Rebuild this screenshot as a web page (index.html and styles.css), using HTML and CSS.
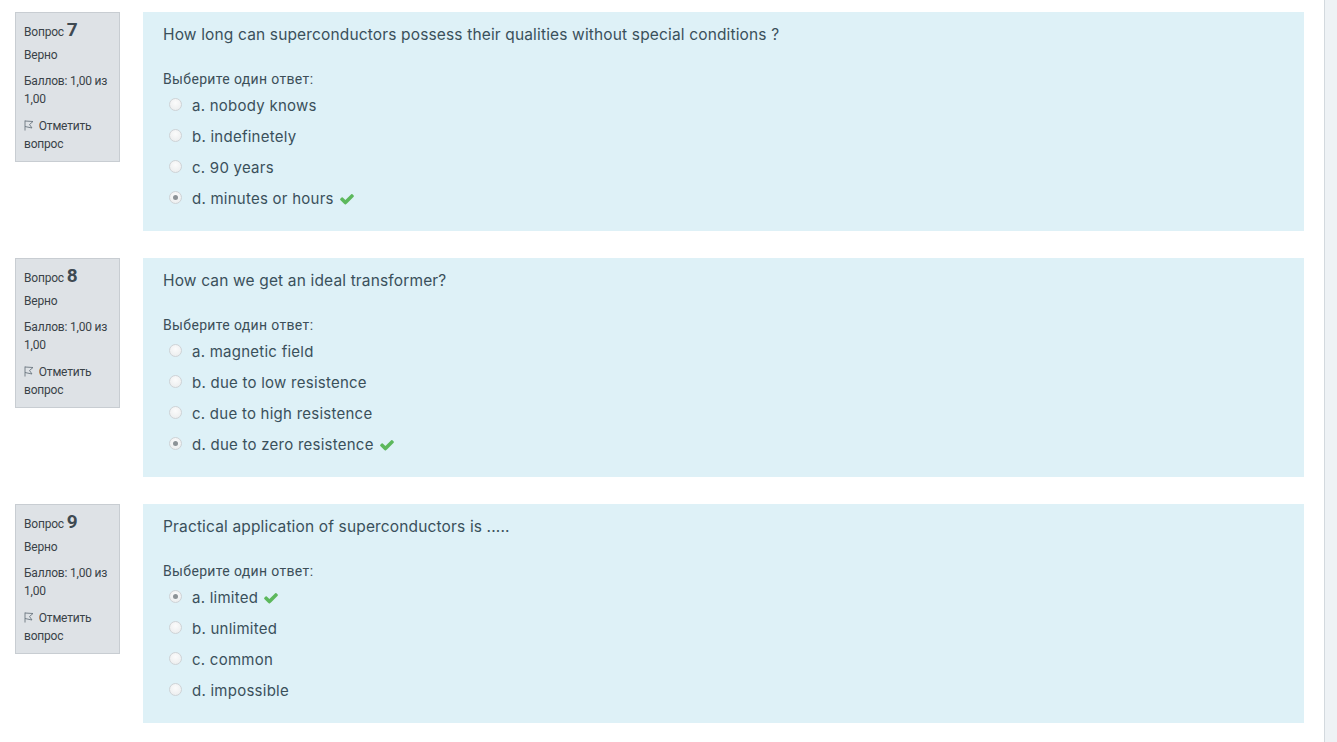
FILE: index.html
```html
<!DOCTYPE html>
<html lang="ru">
<head>
<meta charset="utf-8">
<title>Quiz</title>
<link rel="stylesheet" href="styles.css">
</head>
<body>
<div class="page">
  <main class="main">
    <div class="que">
      <div class="info">
        <div class="qno"><span class="qlabel">Вопрос</span> <span class="num">7</span></div>
        <div class="state">Верно</div>
        <div class="grade">Баллов: 1,00 из 1,00</div>
        <div class="flag"><svg class="flagicon" viewBox="0 0 10 11" width="10" height="11"><path d="M1 0.5 V10.5 M1 1 L9 1.5 L5.5 4.5 L8 8 L1 6.5" fill="none" stroke="#6b7680" stroke-width="0.9" stroke-linejoin="round"/></svg> Отметить вопрос</div>
      </div>
      <div class="content">
        <div class="qtext">How long can superconductors possess their qualities without special conditions ?</div>
        <div class="prompt">Выберите один ответ:</div>
        <div class="answers">
          <div class="ans"><span class="radio"></span><span class="lbl">a. nobody knows</span></div>
          <div class="ans"><span class="radio"></span><span class="lbl">b. indefinetely</span></div>
          <div class="ans"><span class="radio"></span><span class="lbl">c. 90 years</span></div>
          <div class="ans"><span class="radio checked"></span><span class="lbl">d. minutes or hours</span><svg class="check" viewBox="0 0 1792 1792" width="16" height="16"><path d="M1671 566q0 40-28 68l-724 724-136 136q-28 28-68 28t-68-28l-136-136-362-362q-28-28-28-68t28-68l136-136q28-28 68-28t68 28l294 295 656-657q28-28 68-28t68 28l136 136q28 28 28 68z" fill="#5cb85c"/></svg></div>
        </div>
      </div>
    </div>
    <div class="que">
      <div class="info">
        <div class="qno"><span class="qlabel">Вопрос</span> <span class="num">8</span></div>
        <div class="state">Верно</div>
        <div class="grade">Баллов: 1,00 из 1,00</div>
        <div class="flag"><svg class="flagicon" viewBox="0 0 10 11" width="10" height="11"><path d="M1 0.5 V10.5 M1 1 L9 1.5 L5.5 4.5 L8 8 L1 6.5" fill="none" stroke="#6b7680" stroke-width="0.9" stroke-linejoin="round"/></svg> Отметить вопрос</div>
      </div>
      <div class="content">
        <div class="qtext">How can we get an ideal transformer?</div>
        <div class="prompt">Выберите один ответ:</div>
        <div class="answers">
          <div class="ans"><span class="radio"></span><span class="lbl">a. magnetic field</span></div>
          <div class="ans"><span class="radio"></span><span class="lbl">b. due to low resistence</span></div>
          <div class="ans"><span class="radio"></span><span class="lbl">c. due to high resistence</span></div>
          <div class="ans"><span class="radio checked"></span><span class="lbl">d. due to zero resistence</span><svg class="check" viewBox="0 0 1792 1792" width="16" height="16"><path d="M1671 566q0 40-28 68l-724 724-136 136q-28 28-68 28t-68-28l-136-136-362-362q-28-28-28-68t28-68l136-136q28-28 68-28t68 28l294 295 656-657q28-28 68-28t68 28l136 136q28 28 28 68z" fill="#5cb85c"/></svg></div>
        </div>
      </div>
    </div>
    <div class="que">
      <div class="info">
        <div class="qno"><span class="qlabel">Вопрос</span> <span class="num">9</span></div>
        <div class="state">Верно</div>
        <div class="grade">Баллов: 1,00 из 1,00</div>
        <div class="flag"><svg class="flagicon" viewBox="0 0 10 11" width="10" height="11"><path d="M1 0.5 V10.5 M1 1 L9 1.5 L5.5 4.5 L8 8 L1 6.5" fill="none" stroke="#6b7680" stroke-width="0.9" stroke-linejoin="round"/></svg> Отметить вопрос</div>
      </div>
      <div class="content">
        <div class="qtext">Practical application of superconductors is .....</div>
        <div class="prompt">Выберите один ответ:</div>
        <div class="answers">
          <div class="ans"><span class="radio checked"></span><span class="lbl">a. limited</span><svg class="check" viewBox="0 0 1792 1792" width="16" height="16"><path d="M1671 566q0 40-28 68l-724 724-136 136q-28 28-68 28t-68-28l-136-136-362-362q-28-28-28-68t28-68l136-136q28-28 68-28t68 28l294 295 656-657q28-28 68-28t68 28l136 136q28 28 28 68z" fill="#5cb85c"/></svg></div>
          <div class="ans"><span class="radio"></span><span class="lbl">b. unlimited</span></div>
          <div class="ans"><span class="radio"></span><span class="lbl">c. common</span></div>
          <div class="ans"><span class="radio"></span><span class="lbl">d. impossible</span></div>
        </div>
      </div>
    </div>
  </main>
  <aside class="strip"></aside>
</div>
</body>
</html>
```
FILE: styles.css
```css
html, body {
  margin: 0;
  padding: 0;
  background: #ffffff;
}
body {
  font-family: Roboto, "Liberation Sans", sans-serif;
  color: #3c4f59;
}
.page {
  display: flex;
  min-height: 742px;
}
.main {
  flex: 1;
  padding: 12px 20px 0 15px;
}
.strip {
  width: 12px;
  border-left: 1px solid #d3d9de;
  background: #eef2f5;
}
.que {
  display: flex;
  align-items: flex-start;
  gap: 23px;
  margin-bottom: 27px;
}
.info {
  width: 87px;
  flex: none;
  background: #dee2e6;
  border: 1px solid #c8cdd2;
  padding: 8px 8px 8px 8px;
  font-size: 12px;
  line-height: 18px;
  color: #3a4248;
  letter-spacing: -0.2px;
}
.qno {
  height: 18px;
  line-height: 18px;
}
.qlabel {
  font-size: 12px;
}
.num {
  font-size: 19px;
  font-weight: 700;
  color: #3f4a52;
}
.state {
  margin-top: 7px;
}
.grade {
  margin-top: 8px;
}
.flag {
  margin-top: 9px;
}
.flagicon {
  vertical-align: -1px;
  margin-right: 2px;
}
.content {
  flex: 1;
  background: #def1f7;
  padding: 12px 20px 17px 20px;
  min-height: 190px;
}
.qtext {
  font-family: Inter, "Noto Sans", sans-serif;
  font-size: 15.5px;
  letter-spacing: 0.15px;
  line-height: 22px;
  color: #3a505b;
}
.prompt {
  margin-top: 23px;
  font-size: 14px;
  letter-spacing: 0.35px;
  line-height: 20px;
  color: #3c4f59;
}
.answers {
  display: flex;
  flex-direction: column;
  padding-top: 1px;
}
.ans {
  display: flex;
  align-items: center;
  height: 31px;
  padding-left: 6px;
}
.radio {
  width: 11px;
  height: 11px;
  border-radius: 50%;
  border: 1px solid #cfd3d6;
  background: radial-gradient(circle at 50% 35%, #fbfbfb 0%, #e9ebec 100%);
  margin-right: 10px;
  position: relative;
  flex: none;
  margin-top: -2px;
}
.radio.checked::after {
  content: "";
  position: absolute;
  left: 3px;
  top: 3px;
  width: 5px;
  height: 5px;
  border-radius: 50%;
  background: #8d9397;
}
.lbl {
  font-family: Inter, "Noto Sans", sans-serif;
  font-size: 15px;
  letter-spacing: 0.25px;
  color: #3a505b;
}
.check {
  margin-left: 5px;
  margin-top: 1px;
}
```
